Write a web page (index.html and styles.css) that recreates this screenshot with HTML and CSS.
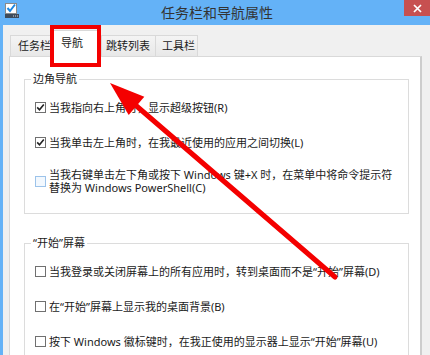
FILE: index.html
```html
<!DOCTYPE html>
<html lang="zh-CN">
<head>
  <meta charset="UTF-8" />
  <title>任务栏和导航属性</title>
  <link rel="stylesheet" href="styles.css">
</head>
<body>
  <div class="window">

    <!-- title bar -->
    <div class="titlebar">
      <svg class="app-icon" width="16" height="16" viewBox="0 0 16 16">
        <rect x="1.5" y="0.5" width="11" height="10" fill="#fff" stroke="#8a8a8a"/>
        <path d="M3.5 5 L6 8 L11 1.5" fill="none" stroke="#1c86e0" stroke-width="2"/>
        <rect x="1" y="11" width="14" height="4" fill="#3e4b5b"/>
        <rect x="9" y="12.5" width="1" height="1" fill="#cfd6de"/>
        <rect x="11" y="12.5" width="1" height="1" fill="#cfd6de"/>
        <rect x="13" y="12.5" width="1" height="1" fill="#cfd6de"/>
      </svg>
      <div class="title">任务栏和导航属性</div>
      <div class="close">
        <svg width="9" height="9" viewBox="0 0 9 9">
          <path d="M1 1 L8 8 M8 1 L1 8" stroke="#fff" stroke-width="1.7"/>
        </svg>
      </div>
    </div>

    <div class="client">
      <div class="tabs">
        <div class="tab tab-1">任务栏</div>
        <div class="tab tab-2 active">导航</div>
        <div class="tab tab-3">跳转列表</div>
        <div class="tab tab-4">工具栏</div>
      </div>

      <div class="panel">
        <fieldset class="group">
          <legend>边角导航</legend>
          <label class="row">
            <span class="box checked"><svg width="9" height="9" viewBox="0 0 9 9"><path d="M1.2 4.4 L3.5 6.8 L7.8 1.6" fill="none" stroke="#222" stroke-width="1.6"/></svg></span>
            <span>当我指向右上角时，显示超级按钮(R)</span>
          </label>
          <label class="row">
            <span class="box checked"><svg width="9" height="9" viewBox="0 0 9 9"><path d="M1.2 4.4 L3.5 6.8 L7.8 1.6" fill="none" stroke="#222" stroke-width="1.6"/></svg></span>
            <span>当我单击左上角时，在我最近使用的应用之间切换(L)</span>
          </label>
          <label class="row tall">
            <span class="box hover"></span>
            <span>当我右键单击左下角或按下 Windows 键+X 时，在菜单中将命令提示符<br>替换为 Windows PowerShell(C)</span>
          </label>
        </fieldset>

        <fieldset class="group second">
          <legend>“开始”屏幕</legend>
          <label class="row">
            <span class="box"></span>
            <span>当我登录或关闭屏幕上的所有应用时，转到桌面而不是“开始”屏幕(D)</span>
          </label>
          <label class="row">
            <span class="box"></span>
            <span>在“开始”屏幕上显示我的桌面背景(B)</span>
          </label>
          <label class="row">
            <span class="box"></span>
            <span>按下 Windows 徽标键时，在我正使用的显示器上显示“开始”屏幕(U)</span>
          </label>
        </fieldset>
      </div>
    </div>

    <!-- annotation drawn over the dialog -->
    <div class="mark-box"></div>
    <svg class="arrow" width="430" height="355" viewBox="0 0 430 355">
      <line x1="335" y1="277" x2="133" y2="103" stroke="#f40000" stroke-width="5" stroke-linecap="round"/>
      <polygon points="110,83 128.7,115 144.3,96.8" fill="#f40000"/>
    </svg>
  </div>
</body>
</html>
```

FILE: styles.css
```css
body {
  margin: 0;
  background: #f0f0f0;
  font-family: "Noto Sans", "Noto Sans CJK SC", sans-serif;
  color: #1a1a1a;
  overflow: hidden;
}

.window {
  position: relative;
  width: 430px;
  height: 355px;
  overflow: hidden;
  background: #f0f0f0;
}

.titlebar {
  display: flex;
  align-items: flex-start;
  height: 25px;
  background: #64b2f7;
}

.app-icon {
  margin: 3px 0 0 4px;
}

.title {
  flex: 1;
  padding-left: 10px;
  text-align: center;
  font-size: 14px;
  line-height: 25px;
  color: #333;
}

.close {
  width: 26px;
  height: 16px;
  background: #c75050;
  display: flex;
  align-items: center;
  justify-content: center;
}

.client {
  border-left: 3px solid #64b2f7;
  padding: 5px 0 0 6px;
  height: 330px;
}

.tabs {
  display: flex;
  align-items: flex-end;
  padding-left: 1px;
  font-size: 11px;
}

.tab {
  box-sizing: border-box;
  height: 21px;
  border: 1px solid #d9d9d9;
  border-bottom: none;
  background: linear-gradient(#f4f4f4, #e8e8e8);
  line-height: 19px;
  white-space: nowrap;
}

.tab-1 { width: 43px; padding-left: 7px; }
.tab-2 { width: 48px; padding-left: 7px; }
.tab-3 { width: 55px; padding-left: 4px; }
.tab-4 { width: 43px; padding-left: 6px; margin-left: -1px; }

.tab.active {
  position: relative;
  z-index: 1;
  height: 27px;
  margin-bottom: -1px;
  background: #fff;
  padding-top: 5px;
  line-height: 14px;
}

.panel {
  box-sizing: border-box;
  width: 413px;
  height: 320px;
  background: #fff;
  border: 1px solid #d9d9d9;
  border-right: 2px solid #cdcdcd;
  padding: 15px 11px 0 14px;
}

.group {
  margin: 0;
  min-width: 0;
  border: 1px solid #dcdcdc;
  padding: 0 10px 19px;
}

.group.second {
  margin-top: 22px;
}

.group legend {
  font-size: 11px;
  line-height: 14px;
  padding: 0 2px;
  margin-left: -4px;
}

.row {
  display: flex;
  align-items: center;
  gap: 3px;
  margin-top: 22px;
  font-size: 11px;
  line-height: 13px;
  white-space: nowrap;
}

.group legend + .row {
  margin-top: 15px;
}

.row.tall {
  margin-top: 19px;
}

.box {
  box-sizing: border-box;
  flex: none;
  width: 11px;
  height: 11px;
  border: 1px solid #707070;
  background: #fff;
  display: flex;
  align-items: center;
  justify-content: center;
}

.box.hover {
  border-color: #9cc3ea;
  background: #f2f8fe;
}

.mark-box {
  position: absolute;
  left: 50px;
  top: 25px;
  width: 51px;
  height: 42px;
  box-sizing: border-box;
  border: 4px solid #f40000;
  z-index: 2;
}

.arrow {
  position: absolute;
  left: 0;
  top: 0;
  z-index: 3;
  pointer-events: none;
}
```
